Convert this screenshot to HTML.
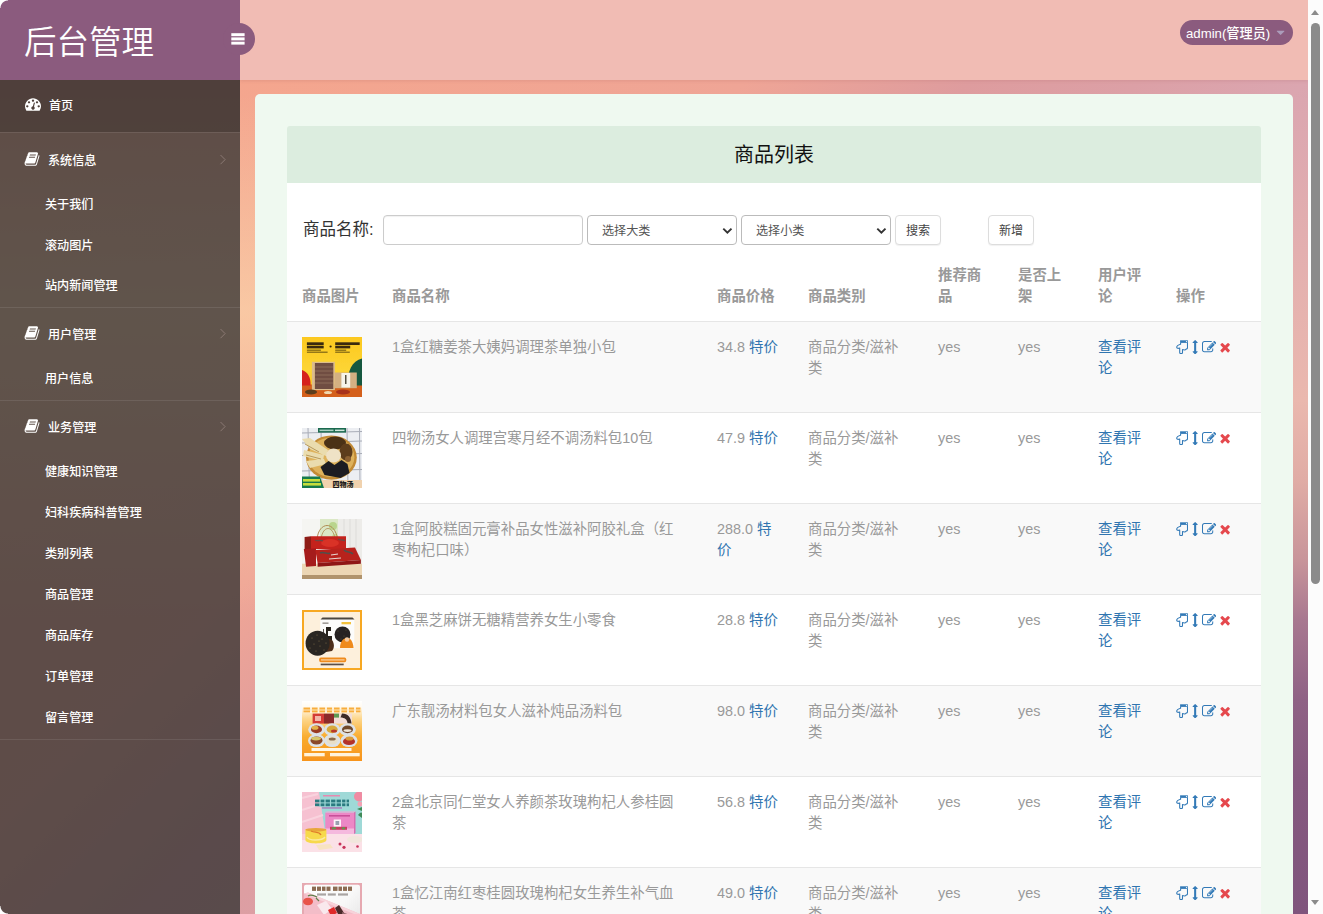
<!DOCTYPE html>
<html lang="zh-CN">
<head>
<meta charset="utf-8">
<title>后台管理</title>
<style>
*{box-sizing:border-box;margin:0;padding:0}
html,body{width:1323px;height:914px;overflow:hidden}
body{font-family:"Liberation Sans","Noto Sans CJK SC",sans-serif;font-size:14.4px;color:#999;position:relative;
background:linear-gradient(to bottom,rgba(255,228,178,0) 95px,rgba(255,228,178,.55) 310px,rgba(255,228,178,0) 620px),linear-gradient(135deg,#f5a68d 0%,#f5a68d 12%,#efa596 37%,#de9c9e 47%,#dca0a6 54.500%,#dba6b0 62%,#cf9aa4 76%,#b08090 87%,#8c5f82 93%,#80557d 100%);}
svg{display:block}
a{color:#3075b0;text-decoration:none}
/* header */
#logo{position:absolute;left:0;top:0;width:240px;height:80px;background:#8b5b7e;color:#fff;font-size:32.5px;line-height:80px;border-top-left-radius:0}
#logo span{position:absolute;left:24px;top:3px;white-space:nowrap;font-weight:350}
#topbar{position:absolute;left:240px;top:0;width:1068px;height:80px;background:#f1bcb4;box-shadow:0 1px 3px rgba(160,90,90,.2)}
#toggle{position:absolute;left:222.700px;top:22.700px;width:32px;height:32px;border-radius:50%;background:#8b5b7e}
#toggle svg{position:absolute;left:8.600px;top:9.900px}
#user{position:absolute;left:1180px;top:20px;width:113px;height:25px;border-radius:13px;background:#8b5b7e;color:#fff;font-size:13.2px;line-height:25px;white-space:nowrap}
#user span{position:absolute;left:6px;top:1px;font-weight:500}
#user svg{position:absolute;left:94.400px;top:6.400px}
/* sidebar */
#side{position:absolute;left:0;top:80px;width:240px;height:834px;background:rgba(50,50,50,.77);color:#fff;font-size:12.1px}
#side .act{position:absolute;left:0;top:0;width:240px;height:52px;background:rgba(0,0,0,.16)}
#side .sep{position:absolute;left:0;width:240px;height:1px;background:rgba(255,255,255,.09)}
#side .it{position:absolute;left:48px;margin-top:2px;height:20px;line-height:20px;white-space:nowrap;font-weight:500}
#side .sub{position:absolute;left:45px;margin-top:2px;height:20px;line-height:20px;white-space:nowrap;font-weight:500}
#side .ic{position:absolute;left:24px}
#side .chev{position:absolute;left:219px}
/* card */
#card{position:absolute;left:255px;top:94px;width:1038px;height:900px;background:#eff9f0;border-radius:5px}
#band{position:absolute;left:32px;top:32px;width:974px;height:57px;background:#dceddf;color:#111;font-size:20px;line-height:57px;text-align:center;border-radius:3px 3px 0 0}
#band span{position:relative;top:1px}
#body{position:absolute;left:32px;top:89px;width:974px;height:820px;background:#fff}
#lbl{position:absolute;left:16px;top:34px;font-size:16.5px;line-height:24px;color:#333;white-space:nowrap}
.inp{position:absolute;top:32px;height:30px;border:1px solid #ccc;border-radius:4px;background:#fff;box-shadow:inset 0 1px 1px rgba(0,0,0,.06)}
.sel{position:absolute;top:32px;height:30px;border:1px solid #bbb;border-radius:4px;background:#fff;font-size:12.1px;line-height:30px;color:#555;padding-left:14px;white-space:nowrap}
.sel svg{position:absolute;right:3px;top:11px}
.btn{position:absolute;top:32px;height:30px;width:46px;border:1px solid #ddd;border-radius:4px;background:#fff;font-size:12.1px;line-height:30px;color:#444;text-align:center;box-shadow:0 1px 1px rgba(0,0,0,.06);white-space:nowrap}
table{position:absolute;left:0;top:66px;width:974px;border-collapse:separate;border-spacing:0;table-layout:fixed;line-height:21px}
th{font-weight:bold;text-align:left;vertical-align:bottom;padding:16px 15px 14px;color:#999}
td{vertical-align:top;padding:15px;border-top:1px solid #e6e6e6}
td:nth-child(2){padding-right:20px}
tbody tr:nth-child(odd){background:#f9f9f9}
td .im{width:60px;height:60px;overflow:hidden}
.ops{position:relative;height:21px}
.ops svg{position:absolute}
.cnr{position:absolute;left:0;width:8px;height:8px}
#rs{position:absolute;left:1292px;top:98px;width:16px;height:816px;background:linear-gradient(to bottom,#dba6b0 0,#e3afaf 152px,#eab8ae 302px,#e0aca5 382px,#c8959a 462px,#a87890 522px,#8f6285 602px,#85597f 682px,#80557d 816px)}
/* scrollbar */
#sb{position:absolute;left:1308px;top:0;width:15px;height:914px;background:#fcfcfc}
#sb .th{position:absolute;left:3px;top:23px;width:9px;height:561px;border-radius:5px;background:#8b8b8b}
#sb .up{position:absolute;left:3px;top:10px;width:0;height:0;border-left:4.5px solid transparent;border-right:4.5px solid transparent;border-bottom:5px solid #8b8b8b}
#sb .dn{position:absolute;left:3px;top:900px;width:0;height:0;border-left:4.5px solid transparent;border-right:4.5px solid transparent;border-top:5px solid #8b8b8b}
</style>
</head>
<body>
<svg width="0" height="0" style="position:absolute">
<defs>
<path id="i-times" d="M1490 1322q0 40-28 68l-136 136q-28 28-68 28t-68-28l-294-294-294 294q-28 28-68 28t-68-28l-136-136q-28-28-28-68t28-68l294-294-294-294q-28-28-28-68t28-68l136-136q28-28 68-28t68 28l294 294 294-294q28-28 68-28t68 28l136 136q28 28 28 68t-28 68l-294 294 294 294q28 28 28 68z"/>
<path id="i-caret" d="M1408 704q0 26-19 45l-448 448q-19 19-45 19t-45-19l-448-448q-19-19-19-45t19-45 45-19h896q26 0 45 19t19 45z"/>
<path id="i-arrv" d="M1216 320q0 26-19 45t-45 19h-128v1024h128q26 0 45 19t19 45-19 45l-256 256q-19 19-45 19t-45-19l-256-256q-19-19-19-45t19-45 45-19h128v-1024h-128q-26 0-45-19t-19-45 19-45l256-256q19-19 45-19t45 19l256 256q19 19 19 45z"/>
<path id="i-edit" d="M888 1184l116-116-152-152-116 116v56h96v96h56zm440-720q-16-16-33 1l-350 350q-17 17-1 33t33-1l350-350q17-17 1-33zm80 594v190q0 119-84.500 203.500t-203.500 84.500h-832q-119 0-203.500-84.500t-84.500-203.500v-832q0-119 84.500-203.500t203.500-84.500h832q63 0 117 25 15 7 18 23 3 17-9 29l-49 49q-14 14-32 8-23-6-45-6h-832q-66 0-113 47t-47 113v832q0 66 47 113t113 47h832q66 0 113-47t47-113v-126q0-13 9-22l64-64q15-15 35-7t20 29zm-96-738l288 288-672 672h-288v-288zm444 132l-92 92-288-288 92-92q28-28 68-28t68 28l152 152q28 28 28 68t-28 68z"/>
<path id="i-dash" d="M384 1152q0-53-37.500-90.500t-90.500-37.500-90.500 37.500-37.500 90.500 37.500 90.500 90.500 37.500 90.500-37.500 37.500-90.500zm192-448q0-53-37.500-90.500t-90.500-37.500-90.500 37.500-37.500 90.500 37.500 90.500 90.500 37.500 90.500-37.500 37.500-90.500zm428 481l101-382q6-26-7.500-48.500t-38.500-29.500-48 6.500-30 39.500l-101 382q-60 5-107 43.500t-63 98.500q-20 77 20 146t117 89 146-20 89-117q16-60-6-117t-72-91zm660-33q0-53-37.500-90.500t-90.500-37.500-90.500 37.500-37.500 90.500 37.500 90.500 90.500 37.500 90.500-37.500 37.500-90.500zm-640-640q0-53-37.500-90.500t-90.500-37.500-90.500 37.500-37.500 90.500 37.500 90.500 90.500 37.500 90.500-37.500 37.500-90.500zm448 192q0-53-37.500-90.500t-90.500-37.500-90.500 37.500-37.500 90.500 37.500 90.500 90.500 37.500 90.500-37.500 37.500-90.500zm320 448q0 261-141 483-19 29-54 29h-1402q-35 0-54-29-141-221-141-483 0-182 71-348t191-286 286-191 348-71 348 71 286 191 191 286 71 348z"/>
<path id="i-book" d="M1703 478q40 57 18 129l-275 906q-19 64-76.500 107.500t-122.500 43.500h-923q-77 0-148.500-53.500t-99.500-131.500q-24-67-2-127 0-4 3-27t4-37q1-8-3-21.500t-3-19.500q2-11 8-21t16.500-23.500 16.500-23.500q23-38 45-91.500t30-91.500q3-10 .500-30t-.500-28q3-11 17-28t17-23q21-36 42-92t25-90q1-9-2.500-32t.500-28q4-13 22-30.500t22-22.500q19-26 42.500-84.500t27.500-96.500q1-8-3-25.500t-2-26.500q2-8 9-18t18-23 17-21q8-12 16.500-30.500t15-35 16-36 19.500-32 26.500-23.500 36-11.500 47.500 5.500l-1 3q38-9 51-9h761q74 0 114 56t18 130l-274 906q-36 119-71.500 153.500t-128.500 34.500h-869q-27 0-38 15-11 16-1 43 24 70 144 70h923q29 0 56-15.500t35-41.500l300-987q7-22 5-57 38 15 59 43zm-1064 2q-4 13 2 22.500t20 9.500h608q13 0 25.500-9.500t16.500-22.500l21-64q4-13-2-22.500t-20-9.500h-608q-13 0-25.500 9.500t-16.500 22.500zm-83 256q-4 13 2 22.500t20 9.500h608q13 0 25.500-9.500t16.500-22.500l21-64q4-13-2-22.500t-20-9.500h-608q-13 0-25.500 9.500t-16.500 22.500z"/>
<g id="i-hand" fill="none" stroke="currentColor" stroke-width="130" stroke-linejoin="round" stroke-linecap="round">
<path d="M560 330v400c-90-60-200-110-300-60-70 40-60 120 0 160l340 300v380c0 70 40 120 110 120s110-50 110-120v-330l180 60c130 40 320-20 320-200 0-160-60-280-60-400v-310"/>
</g>
<g id="i-handtop"><path d="M500 130h830v290h-830z"/></g>
</defs>
</svg>

<div id="topbar"></div>
<div id="logo"><span>后台管理</span></div>
<div id="toggle"><svg width="14" height="12" viewBox="0 0 14 12" fill="#fff"><rect x=".3" y=".2" width="13.300" height="3"/><rect x=".3" y="4.400" width="13.300" height="3"/><rect x=".3" y="8.700" width="13.300" height="2.900"/></svg></div>
<div id="user"><span>admin(管理员)</span><svg width="13.200" height="13.200" viewBox="0 0 1792 1792" fill="#ab9cba"><use href="#i-caret"/></svg></div>

<div id="side">
<div class="act"></div>
<div class="sep" style="top:52px"></div>
<div class="sep" style="top:227px"></div>
<div class="sep" style="top:320px"></div>
<div class="sep" style="top:659px"></div>

<svg class="ic" style="top:16px;left:24.500px" width="16" height="16" viewBox="0 0 1792 1792" fill="#fff"><use href="#i-dash"/></svg>
<div class="it" style="top:14px;left:49px">首页</div>

<svg class="ic" style="top:71px" width="16" height="16" viewBox="0 0 1792 1792" fill="#fff"><use href="#i-book"/></svg>
<div class="it" style="top:69px">系统信息</div>
<svg class="chev" style="top:74px" width="8" height="12" viewBox="0 0 8 12" fill="none" stroke="#8e7d77" stroke-width=".9"><path d="M1.500 1l4.600 4.600-4.600 4.600"/></svg>
<div class="sub" style="top:113px">关于我们</div>
<div class="sub" style="top:154px">滚动图片</div>
<div class="sub" style="top:194px">站内新闻管理</div>

<svg class="ic" style="top:245px" width="16" height="16" viewBox="0 0 1792 1792" fill="#fff"><use href="#i-book"/></svg>
<div class="it" style="top:243px">用户管理</div>
<svg class="chev" style="top:248px" width="8" height="12" viewBox="0 0 8 12" fill="none" stroke="#8e7d77" stroke-width=".9"><path d="M1.500 1l4.600 4.600-4.600 4.600"/></svg>
<div class="sub" style="top:287px">用户信息</div>

<svg class="ic" style="top:338px" width="16" height="16" viewBox="0 0 1792 1792" fill="#fff"><use href="#i-book"/></svg>
<div class="it" style="top:336px">业务管理</div>
<svg class="chev" style="top:341px" width="8" height="12" viewBox="0 0 8 12" fill="none" stroke="#8e7d77" stroke-width=".9"><path d="M1.500 1l4.600 4.600-4.600 4.600"/></svg>
<div class="sub" style="top:380px">健康知识管理</div>
<div class="sub" style="top:421px">妇科疾病科普管理</div>
<div class="sub" style="top:462px">类别列表</div>
<div class="sub" style="top:503px">商品管理</div>
<div class="sub" style="top:544px">商品库存</div>
<div class="sub" style="top:585px">订单管理</div>
<div class="sub" style="top:626px">留言管理</div>
</div>

<div id="rs"></div>
<div id="card">
<div id="band"><span>商品列表</span></div>
<div id="body">
<div id="lbl">商品名称:</div>
<div class="inp" style="left:96px;width:200px"></div>
<div class="sel" style="left:300px;width:150px">选择大类<svg width="11" height="8" viewBox="0 0 11 8" fill="none" stroke="#333" stroke-width="1.900"><path d="M1.300 1.600l4.100 4.100 4.100-4.100"/></svg></div>
<div class="sel" style="left:454px;width:150px">选择小类<svg width="11" height="8" viewBox="0 0 11 8" fill="none" stroke="#333" stroke-width="1.900"><path d="M1.300 1.600l4.100 4.100 4.100-4.100"/></svg></div>
<div class="btn" style="left:608px">搜索</div>
<div class="btn" style="left:701px">新增</div>

<table>
<colgroup><col style="width:90px"><col style="width:325px"><col style="width:91px"><col style="width:130px"><col style="width:80px"><col style="width:80px"><col style="width:78px"><col style="width:100px"></colgroup>
<thead><tr><th>商品图片</th><th>商品名称</th><th>商品价格</th><th>商品类别</th><th>推荐商品</th><th>是否上架</th><th>用户评论</th><th>操作</th></tr></thead>
<tbody id="tb">
<tr><td><div class="im"><svg width="60" height="60" viewBox="0 0 60 60"><defs><filter id="bl" x="0" y="0" width="1" height="1"><feGaussianBlur stdDeviation=".45"/></filter><linearGradient id="g1" x1="0" y1="0" x2="0" y2="1"><stop offset="0" stop-color="#fcc81f"/><stop offset=".55" stop-color="#fdd534"/><stop offset="1" stop-color="#f6b81c"/></linearGradient></defs><g filter="url(#bl)"><rect width="60" height="60" fill="url(#g1)"/><rect y="47.500" width="60" height="12.500" fill="#d4611a"/><path d="M60 21.500C50 24 45 34 46 48.500H60z" fill="#17583f"/><path d="M0 33C6 35 9 41 8.500 48.500H0z" fill="#d6221a"/><rect x="9.900" y="24.800" width="23" height="28.300" fill="#dcbc8c"/><rect x="12.900" y="26" width="18.400" height="26" fill="#6f4d42"/><path d="M13 30h18M13 34h18M13 38h18M13 42h18M13 46h18" stroke="#8d6a58" stroke-width="1.200"/><rect x="32.800" y="35.500" width="22" height="15.700" fill="#d3b082"/><rect x="39.400" y="36" width="8.800" height="14.500" fill="#f6f3ea"/><rect x="43" y="38" width="1.500" height="9" fill="#55503f"/><rect x="4.900" y="5.300" width="16.800" height="2.700" fill="#3b2c10"/><rect x="4.900" y="8.700" width="16.800" height="2.700" fill="#3b2c10"/><rect x="4.900" y="12.600" width="14" height="1.200" fill="#7d6416"/><rect x="4.900" y="14.600" width="20.700" height="1.200" fill="#7d6416"/><rect x="33.200" y="5.300" width="24.500" height="2.700" fill="#3b2c10"/><rect x="33.200" y="8.700" width="15" height="2.700" fill="#3b2c10"/><rect x="33.200" y="12.600" width="11" height="1.200" fill="#7d6416"/><rect x="33.200" y="14.600" width="14.600" height="1.200" fill="#7d6416"/><circle cx="28.600" cy="9.500" r="1.100" fill="#3b2c10"/><ellipse cx="9" cy="55" rx="6" ry="2.600" fill="#5c3d1c"/><ellipse cx="26" cy="55.500" rx="4" ry="1.600" fill="#f0d9b0"/><ellipse cx="41" cy="55" rx="7" ry="2.600" fill="#a8321f"/></g></svg></div></td><td>1盒红糖姜茶大姨妈调理茶单独小包</td><td>34.8 <a>特价</a></td><td>商品分类/滋补类</td><td>yes</td><td>yes</td><td><a>查看评论</a></td><td><div class="ops"><svg style="left:0;top:2.600px" width="12.300" height="14.400" viewBox="0 0 12.300 14.400"><path d="M4.600 2.700V4.300C3 4.700.700 6 .700 7.300c0 1.100 1.400 1.400 3 .700v4.500c0 1.500 2.800 1.500 2.800 0V9.500c1.500.600 3.100.400 3.700-.400 1.200-.400 1.500-1.600 1.300-2.600V2.700" fill="none" stroke="#337ab7" stroke-width="1.100" stroke-linejoin="round"/><path d="M4.100.300h7.800v2.600H4.100z" fill="#337ab7"/><circle cx="10.500" cy="1.600" r=".65" fill="#fff"/></svg><svg style="left:11.750px;top:2.500px" width="14.300" height="14.300" viewBox="0 0 1792 1792" fill="#337ab7"><use href="#i-arrv"/></svg><svg style="left:25.500px;top:2.500px" width="14.300" height="14.300" viewBox="0 0 1792 1792" fill="#337ab7"><use href="#i-edit"/></svg><svg style="left:41.750px;top:3px" width="14.300" height="14.300" viewBox="0 0 1792 1792" fill="#e5484d"><use href="#i-times"/></svg></div></td></tr>
<tr><td><div class="im"><svg width="60" height="60" viewBox="0 0 60 60"><g filter="url(#bl)"><rect width="60" height="60" fill="#eceef2"/><path d="M0 5l60-1.500M0 15l60-2M0 27.500l60-2M0 43l60-1.500M6 0l1.500 60M19 0l1 60M45 0l1 60M57.500 0l.5 60" stroke="#a9adb8" stroke-width="1"/><ellipse cx="29.400" cy="29.600" rx="25.400" ry="22.200" fill="#c38b35"/><ellipse cx="29.400" cy="29.200" rx="23" ry="19.800" fill="#deb25c"/><path d="M0 11l8-1 18 12-2 6-16-7zM2 22l20 5-1 6-20-5zM4 33l18-2 2 5-16 4z" fill="#eadcae"/><path d="M3 16l14 8M4 27l15 4" stroke="#b89a5c" stroke-width="1"/><ellipse cx="33" cy="15" rx="11" ry="6.500" fill="#4b3018"/><ellipse cx="44" cy="24" rx="6.500" ry="8.500" fill="#5d3d1f"/><circle cx="46" cy="31" r="3" fill="#8b6132"/><ellipse cx="31.500" cy="27.500" rx="7.500" ry="7" fill="#efe2c6"/><path d="M18.500 39l8-6 6 4 7-5 6 4 2 9-9 5-16-3z" fill="#1b1f21"/><rect x="16" y="0" width="28" height="4.600" fill="#1b6a50"/><rect x="17.500" y="1.600" width="14" height="1.500" fill="#a9cfc1"/><rect x="33" y="1.600" width="9.500" height="1.500" fill="#cfe6dc"/><rect x="0" y="52" width="60" height="8" fill="#f0d2ae"/><path d="M0 48.500h18l4 11.500H0z" fill="#177a4e"/><rect x="1" y="51" width="17" height="2.600" fill="#c5de3c"/><rect x="1" y="55" width="18" height="2.600" fill="#c5de3c"/></g><text x="30.500" y="58.800" font-size="7" font-weight="900" fill="#1d1d1d" font-family="Liberation Sans,Noto Sans CJK SC,sans-serif">四物汤</text></svg></div></td><td>四物汤女人调理宫寒月经不调汤料包10包</td><td>47.9 <a>特价</a></td><td>商品分类/滋补类</td><td>yes</td><td>yes</td><td><a>查看评论</a></td><td><div class="ops"><svg style="left:0;top:2.600px" width="12.300" height="14.400" viewBox="0 0 12.300 14.400"><path d="M4.600 2.700V4.300C3 4.700.700 6 .700 7.300c0 1.100 1.400 1.400 3 .700v4.500c0 1.500 2.800 1.500 2.800 0V9.500c1.500.600 3.100.400 3.700-.400 1.200-.400 1.500-1.600 1.300-2.600V2.700" fill="none" stroke="#337ab7" stroke-width="1.100" stroke-linejoin="round"/><path d="M4.100.300h7.800v2.600H4.100z" fill="#337ab7"/><circle cx="10.500" cy="1.600" r=".65" fill="#fff"/></svg><svg style="left:11.750px;top:2.500px" width="14.300" height="14.300" viewBox="0 0 1792 1792" fill="#337ab7"><use href="#i-arrv"/></svg><svg style="left:25.500px;top:2.500px" width="14.300" height="14.300" viewBox="0 0 1792 1792" fill="#337ab7"><use href="#i-edit"/></svg><svg style="left:41.750px;top:3px" width="14.300" height="14.300" viewBox="0 0 1792 1792" fill="#e5484d"><use href="#i-times"/></svg></div></td></tr>
<tr><td><div class="im"><svg width="60" height="60" viewBox="0 0 60 60"><g filter="url(#bl)"><rect width="60" height="60" fill="#f5f5f2"/><rect x="18" width="18" height="24" fill="#dbe8c6"/><circle cx="31" cy="7" r="4" fill="#b9d58c"/><circle cx="33" cy="18" r="3" fill="#c5dc9c"/><rect x="36" width="24" height="45" fill="#edece9"/><path d="M42 0v44M48 0v44M54 0v44" stroke="#e2e1de" stroke-width="1.500"/><rect y="44.700" width="60" height="15.300" fill="#ecd6b4"/><rect y="56" width="60" height="4" fill="#b0936c"/><path d="M15 20C17 2 33 2 35.500 20" fill="none" stroke="#b08c52" stroke-width="1"/><path d="M19 20C21 6 31 6 33 20" fill="none" stroke="#b08c52" stroke-width=".8"/><path d="M2.600 18l6.400-.8V31H2.600z" fill="#8e1b19"/><path d="M9 17.200h35V30H9z" fill="#c4221e"/><ellipse cx="28" cy="24" rx="9" ry="4" fill="#d93027"/><path d="M1.800 30l12.200-.6V47l-10 .8z" fill="#a51c1b"/><path d="M13.300 31L53 28.600 58.900 41 15.600 44z" fill="#b7211f"/><path d="M15.600 44L58.900 41v3.700L15.600 47.800z" fill="#8f1716"/><path d="M18 34c4-2 7 2 10 0M42 31c3 3 6 1 9 4" stroke="#50504a" stroke-width="1.600" fill="none"/><path d="M29 36l7-1M27 40l12-1" stroke="#e6d7cf" stroke-width="1.200"/><path d="M13 21c3 2 5-1 8 1M36 20c3 2 5 0 7 2" stroke="#6c4a44" stroke-width="1.300" fill="none"/></g></svg></div></td><td>1盒阿胶糕固元膏补品女性滋补阿胶礼盒（红枣枸杞口味）</td><td>288.0 <a>特价</a></td><td>商品分类/滋补类</td><td>yes</td><td>yes</td><td><a>查看评论</a></td><td><div class="ops"><svg style="left:0;top:2.600px" width="12.300" height="14.400" viewBox="0 0 12.300 14.400"><path d="M4.600 2.700V4.300C3 4.700.700 6 .700 7.300c0 1.100 1.400 1.400 3 .700v4.500c0 1.500 2.800 1.500 2.800 0V9.500c1.500.600 3.100.400 3.700-.400 1.200-.400 1.500-1.600 1.300-2.600V2.700" fill="none" stroke="#337ab7" stroke-width="1.100" stroke-linejoin="round"/><path d="M4.100.300h7.800v2.600H4.100z" fill="#337ab7"/><circle cx="10.500" cy="1.600" r=".65" fill="#fff"/></svg><svg style="left:11.750px;top:2.500px" width="14.300" height="14.300" viewBox="0 0 1792 1792" fill="#337ab7"><use href="#i-arrv"/></svg><svg style="left:25.500px;top:2.500px" width="14.300" height="14.300" viewBox="0 0 1792 1792" fill="#337ab7"><use href="#i-edit"/></svg><svg style="left:41.750px;top:3px" width="14.300" height="14.300" viewBox="0 0 1792 1792" fill="#e5484d"><use href="#i-times"/></svg></div></td></tr>
<tr><td><div class="im"><svg width="60" height="60" viewBox="0 0 60 60"><g filter="url(#bl)"><rect width="60" height="60" fill="#f7a823"/><rect x="2" y="2" width="56" height="56" fill="#fdf0dc"/><rect x="18.300" y="9" width="34" height="29.200" fill="#fcfcfb"/><path d="M20.500 7.600h30l2 2h-34z" fill="#4c4640"/><rect x="39.500" y="12" width="9.500" height="2.300" fill="#f3c23c"/><rect x="20.500" y="12.500" width="6" height="1.300" fill="#8b8680"/><path d="M24 17h5v4h-3v5h4v6h-6z" fill="#25211e"/><path d="M21.500 19v12" stroke="#55504a" stroke-width="1"/><circle cx="40.500" cy="24.400" r="8" fill="#262320"/><path d="M38 38c0-6 3-10 7-10s6 4 6.600 10z" fill="#ef8b1f"/><circle cx="45" cy="29.500" r="2.200" fill="#f3c9a0"/><path d="M25 28l5 2c3 4 2 9 0 11l-6 1z" fill="#4d2e1a"/><ellipse cx="15.600" cy="33.200" rx="12" ry="12.500" fill="#2a2521"/><g fill="#8d7b58"><circle cx="10" cy="28" r=".5"/><circle cx="15" cy="25" r=".5"/><circle cx="20" cy="29" r=".5"/><circle cx="12" cy="34" r=".5"/><circle cx="18" cy="36" r=".5"/><circle cx="8" cy="38" r=".5"/><circle cx="14" cy="41" r=".5"/><circle cx="22" cy="40" r=".5"/><circle cx="17" cy="31" r=".5"/><circle cx="24" cy="33" r=".5"/><circle cx="36" cy="21" r=".4"/><circle cx="42" cy="26" r=".4"/><circle cx="44" cy="20" r=".4"/><circle cx="39" cy="29" r=".4"/></g><rect x="17.200" y="47.600" width="27" height="4.600" rx="1.600" fill="#ef8b1f"/><rect x="19" y="49.200" width="23.500" height="1.400" fill="#f9c88e"/><rect x="18.700" y="53.600" width="23" height="1.700" fill="#5a5048"/></g></svg></div></td><td>1盒黑芝麻饼无糖精营养女生小零食</td><td>28.8 <a>特价</a></td><td>商品分类/滋补类</td><td>yes</td><td>yes</td><td><a>查看评论</a></td><td><div class="ops"><svg style="left:0;top:2.600px" width="12.300" height="14.400" viewBox="0 0 12.300 14.400"><path d="M4.600 2.700V4.300C3 4.700.700 6 .700 7.300c0 1.100 1.400 1.400 3 .700v4.500c0 1.500 2.800 1.500 2.800 0V9.500c1.500.600 3.100.400 3.700-.400 1.200-.400 1.500-1.600 1.300-2.600V2.700" fill="none" stroke="#337ab7" stroke-width="1.100" stroke-linejoin="round"/><path d="M4.100.300h7.800v2.600H4.100z" fill="#337ab7"/><circle cx="10.500" cy="1.600" r=".65" fill="#fff"/></svg><svg style="left:11.750px;top:2.500px" width="14.300" height="14.300" viewBox="0 0 1792 1792" fill="#337ab7"><use href="#i-arrv"/></svg><svg style="left:25.500px;top:2.500px" width="14.300" height="14.300" viewBox="0 0 1792 1792" fill="#337ab7"><use href="#i-edit"/></svg><svg style="left:41.750px;top:3px" width="14.300" height="14.300" viewBox="0 0 1792 1792" fill="#e5484d"><use href="#i-times"/></svg></div></td></tr>
<tr><td><div class="im"><svg width="60" height="60" viewBox="0 0 60 60"><defs><linearGradient id="g5" x1="0" y1="0" x2="0" y2="1"><stop offset="0" stop-color="#fff"/><stop offset=".1" stop-color="#fffaf0"/><stop offset=".3" stop-color="#fdd68a"/><stop offset=".6" stop-color="#f9ac2e"/><stop offset="1" stop-color="#f7941e"/></linearGradient></defs><g filter="url(#bl)"><rect width="60" height="60" fill="url(#g5)"/><rect x="1.500" y="6.500" width="57" height="4.800" fill="#f8ad3c"/><path d="M9 6v6M16.500 6v6M24 6v6M31 6v6M38.500 6v6M46 6v6M53 6v6" stroke="#fff7e6" stroke-width="1.800"/><path d="M1 9h58" stroke="#fde7bd" stroke-width="1"/><rect x="10.600" y="12.600" width="11.400" height="10" fill="#d43b34"/><rect x="13" y="15" width="6" height="5" fill="#f2b6a8"/><rect x="22" y="12.600" width="10" height="10" fill="#8b2a2b"/><rect x="32" y="12.600" width="18" height="10" fill="#f3ddd6"/><path d="M40 12.600c6 0 9 4 9.500 10h-4c0-4-3-6-7-6z" fill="#3a2a26"/><rect x="32" y="12.600" width="5" height="4" fill="#5d9a52"/><g fill="#dde2e6"><ellipse cx="14.500" cy="28.600" rx="8.300" ry="6.300"/><ellipse cx="30.200" cy="28.600" rx="8.300" ry="6.300"/><ellipse cx="45.500" cy="28.600" rx="8.300" ry="6.300"/><ellipse cx="14.500" cy="39.600" rx="8.500" ry="6.500"/><ellipse cx="30.200" cy="39.600" rx="8.300" ry="6.500"/><ellipse cx="47" cy="39.600" rx="8.500" ry="6.500"/></g><ellipse cx="14.500" cy="28.400" rx="5.500" ry="3.800" fill="#9a3a22"/><ellipse cx="13" cy="26.800" rx="3.500" ry="2" fill="#e4b24a"/><ellipse cx="30.200" cy="28.400" rx="5.500" ry="3.800" fill="#d8a93c"/><ellipse cx="32" cy="30" rx="3" ry="1.600" fill="#b8382a"/><ellipse cx="45.500" cy="28.400" rx="5.500" ry="3.800" fill="#70482c"/><ellipse cx="45.500" cy="29.600" rx="4" ry="1.300" fill="#efe6d8"/><ellipse cx="14.500" cy="39.400" rx="6" ry="4" fill="#8a4a2a"/><ellipse cx="14" cy="37.600" rx="5" ry="1.800" fill="#d6c66a"/><ellipse cx="30.200" cy="39.400" rx="5.500" ry="4" fill="#e9dfc8"/><ellipse cx="30.200" cy="38" rx="3.500" ry="1.500" fill="#8c6a48"/><ellipse cx="47" cy="40.400" rx="6" ry="3.600" fill="#b3322a"/><ellipse cx="47.500" cy="37.500" rx="4" ry="2" fill="#d99a3a"/><rect x="9.500" y="47" width="40" height="3" fill="#fff6e4"/><rect x="2.200" y="52" width="20.500" height="3.300" fill="#fff3dc"/><rect x="28" y="52" width="29.700" height="3.300" fill="#fff3dc"/></g></svg></div></td><td>广东靓汤材料包女人滋补炖品汤料包</td><td>98.0 <a>特价</a></td><td>商品分类/滋补类</td><td>yes</td><td>yes</td><td><a>查看评论</a></td><td><div class="ops"><svg style="left:0;top:2.600px" width="12.300" height="14.400" viewBox="0 0 12.300 14.400"><path d="M4.600 2.700V4.300C3 4.700.700 6 .700 7.300c0 1.100 1.400 1.400 3 .700v4.500c0 1.500 2.800 1.500 2.800 0V9.500c1.500.600 3.100.400 3.700-.400 1.200-.400 1.500-1.600 1.300-2.600V2.700" fill="none" stroke="#337ab7" stroke-width="1.100" stroke-linejoin="round"/><path d="M4.100.300h7.800v2.600H4.100z" fill="#337ab7"/><circle cx="10.500" cy="1.600" r=".65" fill="#fff"/></svg><svg style="left:11.750px;top:2.500px" width="14.300" height="14.300" viewBox="0 0 1792 1792" fill="#337ab7"><use href="#i-arrv"/></svg><svg style="left:25.500px;top:2.500px" width="14.300" height="14.300" viewBox="0 0 1792 1792" fill="#337ab7"><use href="#i-edit"/></svg><svg style="left:41.750px;top:3px" width="14.300" height="14.300" viewBox="0 0 1792 1792" fill="#e5484d"><use href="#i-times"/></svg></div></td></tr>
<tr><td><div class="im"><svg width="60" height="60" viewBox="0 0 60 60"><g filter="url(#bl)"><rect width="60" height="60" fill="#9fd9d7"/><path d="M0 0h17l6.500 43H0z" fill="#f6c1d1"/><path d="M0 6l16-4M0 18l19-6M0 30l21-7" stroke="#f9d3de" stroke-width="2"/><rect y="42" width="60" height="18" fill="#fbe1e7"/><path d="M0 42h24l-2 6H0z" fill="#f8d0db"/><circle cx="57" cy="4.500" r="5" fill="#f08ba2"/><circle cx="58" cy="12" r="2.500" fill="#f3a2b4"/><path d="M55 17l5-2v4zM56 23c2-3 4-3 4-2v5z" fill="#3f8a58"/><rect x="21" y="3" width="17" height="1.500" fill="#e58ab0"/><rect x="13" y="7.600" width="34" height="2.800" fill="#2b7a80"/><rect x="13" y="11.400" width="34" height="2.800" fill="#2b7a80"/><path d="M18 7v8M23 7v8M28.500 7v8M34 7v8M39.500 7v8M44 7v8" stroke="#9fd9d7" stroke-width="1.200"/><rect x="20" y="15.300" width="20" height="1.300" fill="#a774b8"/><rect x="23.300" y="20.600" width="28.700" height="21.400" fill="#ec88c6"/><path d="M23.300 20.600l1.500-1h28.700l-1.500 1z" fill="#f4a8d6"/><path d="M52 20.600l1.500-1V41L52 42z" fill="#d76cb0"/><rect x="23.300" y="36.500" width="28.700" height="5.500" fill="#f5b9de"/><rect x="27" y="23" width="21" height="1.600" fill="#c9509a"/><rect x="31.700" y="27.500" width="7.300" height="7.300" fill="#fdf2f8"/><rect x="33.500" y="29" width="3.700" height="4" fill="#9aa0b0"/><rect x="28" y="34.800" width="17" height="3" fill="#c7415f"/><rect x="30" y="35.300" width="4" height="2" fill="#5d9a52"/><rect x="40" y="35.300" width="3" height="2" fill="#5d9a52"/><path d="M3.400 37.500h21v10.500c0 4.500-21 4.500-21 0z" fill="#f7d94c"/><ellipse cx="13.900" cy="37.800" rx="10.500" ry="1.800" fill="#e8a63a"/><path d="M9 39c4 2 8 0 10 4" stroke="#e07c2a" stroke-width="1.300" fill="none"/><path d="M5 45c2 4 15 4 18 0" stroke="#fbeaa0" stroke-width="1.500" fill="none"/><ellipse cx="53" cy="47.500" rx="8" ry="3.600" fill="#f1e6dc"/><circle cx="38" cy="52" r="1.500" fill="#c8325a"/><circle cx="42" cy="55.300" r="1.600" fill="#c8325a"/><circle cx="55.500" cy="54.500" r="1.300" fill="#c8325a"/><path d="M14 53l14-1 3 4-14 2z" fill="#f8e3c2"/></g></svg></div></td><td>2盒北京同仁堂女人养颜茶玫瑰枸杞人参桂圆茶</td><td>56.8 <a>特价</a></td><td>商品分类/滋补类</td><td>yes</td><td>yes</td><td><a>查看评论</a></td><td><div class="ops"><svg style="left:0;top:2.600px" width="12.300" height="14.400" viewBox="0 0 12.300 14.400"><path d="M4.600 2.700V4.300C3 4.700.700 6 .700 7.300c0 1.100 1.400 1.400 3 .700v4.500c0 1.500 2.800 1.500 2.800 0V9.500c1.500.600 3.100.400 3.700-.400 1.200-.400 1.500-1.600 1.300-2.600V2.700" fill="none" stroke="#337ab7" stroke-width="1.100" stroke-linejoin="round"/><path d="M4.100.300h7.800v2.600H4.100z" fill="#337ab7"/><circle cx="10.500" cy="1.600" r=".65" fill="#fff"/></svg><svg style="left:11.750px;top:2.500px" width="14.300" height="14.300" viewBox="0 0 1792 1792" fill="#337ab7"><use href="#i-arrv"/></svg><svg style="left:25.500px;top:2.500px" width="14.300" height="14.300" viewBox="0 0 1792 1792" fill="#337ab7"><use href="#i-edit"/></svg><svg style="left:41.750px;top:3px" width="14.300" height="14.300" viewBox="0 0 1792 1792" fill="#e5484d"><use href="#i-times"/></svg></div></td></tr>
<tr><td><div class="im"><svg width="60" height="60" viewBox="0 0 60 60"><defs><linearGradient id="g7" x1="0" y1="0" x2="1" y2="1"><stop offset="0" stop-color="#fdfdfd"/><stop offset=".5" stop-color="#f8f8f8"/><stop offset="1" stop-color="#dcdcdc"/></linearGradient></defs><g filter="url(#bl)"><rect width="60" height="60" fill="#e6a9b1"/><rect x="2" y="1.800" width="56" height="58.200" rx="2" fill="url(#g7)"/><rect x="10" y="3.600" width="18.500" height="4.300" fill="#8c6c52"/><rect x="31" y="3.600" width="19" height="4.300" fill="#8c6c52"/><path d="M14.500 3v5.500M19.500 3v5.500M24 3v5.500M36 3v5.500M40.500 3v5.500M45.500 3v5.500" stroke="#fbfbfb" stroke-width="1"/><rect x="15" y="10.400" width="9" height="2.200" fill="#a9a4a2"/><rect x="25.800" y="10.400" width="8" height="2.200" fill="#a9a4a2"/><rect x="36" y="10.400" width="10" height="2.200" fill="#a9a4a2"/><path d="M2 10.500l4-1L58 31v29H2z" fill="#f3bdc8"/><path d="M2 10.500l4-1L58 31v2.500z" fill="#f7d3da"/><ellipse cx="6" cy="18.500" rx="5" ry="3.800" fill="#e8524a"/><path d="M6 13c3-2 7 0 9 1M14 15l3 3" stroke="#5f7f4a" stroke-width="1.200" fill="none"/><path d="M15 22l9-4 6 8-8 6z" fill="#f9e8ed"/><path d="M26 27l6-3 3 6-6 3z" fill="#e02b2b"/><path d="M33 25l4-3 5 8-5 3z" fill="#4b2b29"/><path d="M40 29l8 3 1 4-8-2z" fill="#9a6a70"/></g></svg></div></td><td>1盒忆江南红枣桂圆玫瑰枸杞女生养生补气血茶</td><td>49.0 <a>特价</a></td><td>商品分类/滋补类</td><td>yes</td><td>yes</td><td><a>查看评论</a></td><td><div class="ops"><svg style="left:0;top:2.600px" width="12.300" height="14.400" viewBox="0 0 12.300 14.400"><path d="M4.600 2.700V4.300C3 4.700.700 6 .700 7.300c0 1.100 1.400 1.400 3 .700v4.500c0 1.500 2.800 1.500 2.800 0V9.500c1.500.600 3.100.400 3.700-.400 1.200-.400 1.500-1.600 1.300-2.600V2.700" fill="none" stroke="#337ab7" stroke-width="1.100" stroke-linejoin="round"/><path d="M4.100.300h7.800v2.600H4.100z" fill="#337ab7"/><circle cx="10.500" cy="1.600" r=".65" fill="#fff"/></svg><svg style="left:11.750px;top:2.500px" width="14.300" height="14.300" viewBox="0 0 1792 1792" fill="#337ab7"><use href="#i-arrv"/></svg><svg style="left:25.500px;top:2.500px" width="14.300" height="14.300" viewBox="0 0 1792 1792" fill="#337ab7"><use href="#i-edit"/></svg><svg style="left:41.750px;top:3px" width="14.300" height="14.300" viewBox="0 0 1792 1792" fill="#e5484d"><use href="#i-times"/></svg></div></td></tr>
</tbody>
</table>
</div>
</div>

<div class="cnr" style="top:0;background:radial-gradient(circle at 100% 100%,rgba(255,255,255,0) 7px,#fff 8px)"></div>
<div class="cnr" style="top:906px;background:radial-gradient(circle at 100% 0,rgba(255,255,255,0) 7px,#fff 8px)"></div>
<div id="sb"><div class="up"></div><div class="th"></div><div class="dn"></div></div>
</body>
</html>
